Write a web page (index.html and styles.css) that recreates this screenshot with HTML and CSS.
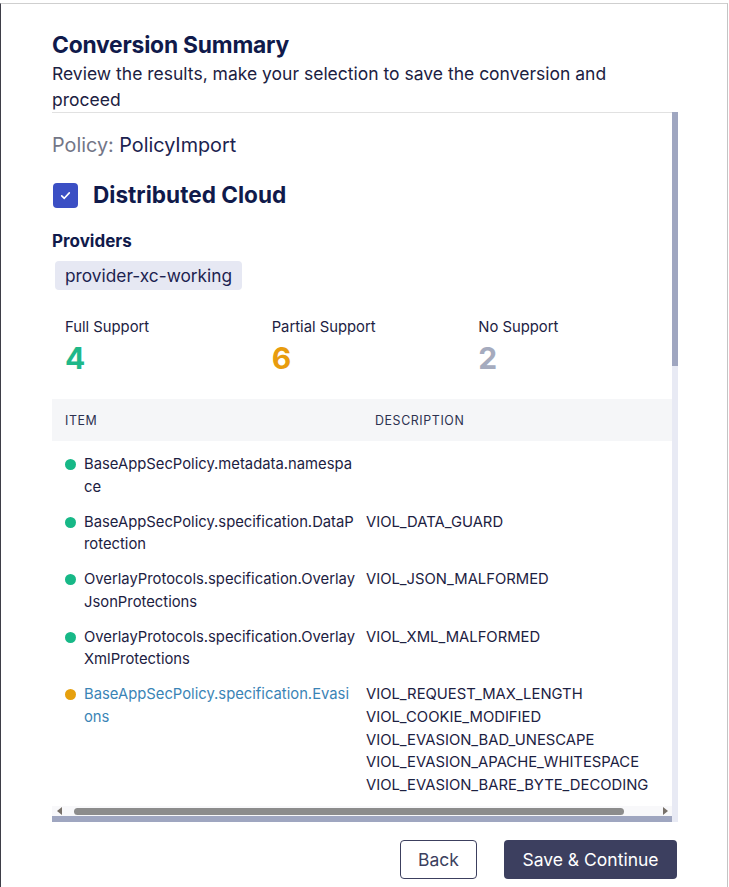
FILE: index.html
```html
<!DOCTYPE html>
<html lang="en">
<head>
<meta charset="utf-8">
<title>Conversion Summary</title>
<link rel="stylesheet" href="styles.css">
</head>
<body>
<div class="modal">
  <h1 class="title">Conversion Summary</h1>
  <p class="subtitle">Review the results, make your selection to save the conversion and proceed</p>

  <div class="scroller">
    <div class="scroll-main">
      <div class="content">
        <div class="policy"><span class="policy-label">Policy:</span> PolicyImport</div>

        <label class="target">
          <span class="checkbox">
            <svg width="13" height="13" viewBox="0 0 12 12"><path d="M2.5 6.3 L4.9 8.6 L9.5 3.6" fill="none" stroke="#fff" stroke-width="1.5" stroke-linecap="round" stroke-linejoin="round"/></svg>
          </span>
          <span class="target-name">Distributed Cloud</span>
        </label>

        <div class="providers-label">Providers</div>
        <div class="chips"><span class="chip">provider-xc-working</span></div>

        <div class="stats">
          <div class="stat"><div class="stat-label">Full Support</div><div class="stat-num full">4</div></div>
          <div class="stat"><div class="stat-label">Partial Support</div><div class="stat-num partial">6</div></div>
          <div class="stat"><div class="stat-label">No Support</div><div class="stat-num none">2</div></div>
        </div>

        <div class="table-wrap">
          <div class="table">
            <div class="thead">
              <div class="th th-item">Item</div>
              <div class="th th-desc">Description</div>
            </div>
            <div class="tbody">
              <div class="tr">
                <div class="td-item"><span class="dot green"></span><span class="item-text">BaseAppSecPolicy.metadata.namespace</span></div>
                <div class="td-desc"></div>
              </div>
              <div class="tr">
                <div class="td-item"><span class="dot green"></span><span class="item-text">BaseAppSecPolicy.specification.DataProtection</span></div>
                <div class="td-desc">VIOL_DATA_GUARD</div>
              </div>
              <div class="tr">
                <div class="td-item"><span class="dot green"></span><span class="item-text">OverlayProtocols.specification.OverlayJsonProtections</span></div>
                <div class="td-desc">VIOL_JSON_MALFORMED</div>
              </div>
              <div class="tr">
                <div class="td-item"><span class="dot green"></span><span class="item-text">OverlayProtocols.specification.OverlayXmlProtections</span></div>
                <div class="td-desc">VIOL_XML_MALFORMED</div>
              </div>
              <div class="tr">
                <div class="td-item"><span class="dot orange"></span><a class="item-text link" href="#">BaseAppSecPolicy.specification.Evasions</a></div>
                <div class="td-desc">
                  <div>VIOL_REQUEST_MAX_LENGTH</div>
                  <div>VIOL_COOKIE_MODIFIED</div>
                  <div>VIOL_EVASION_BAD_UNESCAPE</div>
                  <div>VIOL_EVASION_APACHE_WHITESPACE</div>
                  <div>VIOL_EVASION_BARE_BYTE_DECODING</div>
                </div>
              </div>
            </div>
          </div>
        </div>

        <div class="hscroll">
          <span class="arrow arrow-left"></span>
          <span class="hthumb-track"><span class="hthumb"></span></span>
          <span class="arrow arrow-right"></span>
        </div>
      </div>
      <div class="vbar"><div class="vthumb"></div></div>
    </div>
    <div class="hbar-row"><div class="hbar"></div><div class="corner"></div></div>
  </div>

  <div class="actions">
    <button class="btn btn-secondary" type="button">Back</button>
    <button class="btn btn-primary" type="button">Save &amp; Continue</button>
  </div>
</div>
</body>
</html>
```

FILE: styles.css
```css
* { box-sizing: border-box; }

html, body {
  margin: 0;
  padding: 0;
  background: #ffffff;
  font-family: Inter, "Noto Sans", sans-serif;
  color: #1c2142;
}

.modal {
  margin-top: 3px;
  width: 728px;
  height: 884px;
  border-top: 1px solid #cfcfcf;
  border-right: 1px solid #c4c4c4;
  border-left: 1px solid #3e3e48;
  padding: 28px 49px 0 51px;
  display: flex;
  flex-direction: column;
  overflow: hidden;
}

.title {
  margin: 0;
  font-size: 22.8px;
  line-height: 26px;
  font-weight: 700;
  color: #101a4b;
  letter-spacing: -0.2px;
}

.subtitle {
  margin: 3px 0 0;
  font-size: 17.5px;
  line-height: 26px;
  color: #1c2142;
  width: 600px;
}

.scroller {
  margin-top: -1px;
  width: 626px;
  height: 710px;
  display: flex;
  flex-direction: column;
}

.scroll-main {
  flex: 1;
  display: flex;
  min-height: 0;
}

.content {
  width: 620px;
  border-top: 1px solid #e1e1e1;
  display: flex;
  flex-direction: column;
  overflow: hidden;
}

.vbar {
  width: 6px;
  background: #e8eaf4;
  display: flex;
  flex-direction: column;
}

.vthumb {
  height: 254px;
  background: #9fa6c0;
}

.hbar-row {
  display: flex;
  height: 6px;
}

.hbar {
  width: 620px;
  background: #9fa6c0;
}

.corner {
  width: 6px;
  background: #e8eaf4;
}

.policy {
  margin-top: 20px;
  font-size: 19.8px;
  line-height: 24px;
  color: #1c2350;
}

.policy-label { color: #737687; }

.target {
  margin-top: 24px;
  display: flex;
  align-items: center;
  gap: 15px;
  padding-left: 1px;
}

.checkbox {
  width: 25px;
  height: 25px;
  border-radius: 4px;
  background: #3b4fc4;
  display: flex;
  align-items: center;
  justify-content: center;
}

.target-name {
  font-size: 22.6px;
  line-height: 28px;
  font-weight: 700;
  color: #101a4b;
}

.providers-label {
  margin-top: 21px;
  font-size: 17px;
  line-height: 22px;
  font-weight: 700;
  color: #101a4b;
}

.chips {
  margin-top: 9px;
  display: flex;
  padding-left: 3px;
}

.chip {
  background: #e6e8f3;
  border-radius: 4px;
  padding: 0 10px;
  height: 29px;
  line-height: 29px;
  font-size: 17.3px;
  color: #1c2350;
}

.stats {
  margin-top: 27px;
  display: grid;
  grid-template-columns: repeat(3, 1fr);
}

.stat { padding-left: 13px; }

.stat-label {
  font-size: 14.8px;
  line-height: 20px;
  color: #1c2142;
}

.stat-num {
  margin-top: 3px;
  font-size: 30px;
  line-height: 36px;
  font-weight: 700;
}

.stat-num.full { color: #1fb889; }
.stat-num.partial { color: #e89c0e; }
.stat-num.none { color: #a5abbe; }

.table-wrap {
  margin-top: 23px;
  flex: 1;
  min-height: 0;
  overflow: hidden;
}

.table {
  width: 668px;
}

.thead {
  display: grid;
  grid-template-columns: 310px 1fr;
  height: 42px;
  align-items: center;
  background: #f5f6f8;
}

.th {
  font-size: 12.4px;
  text-transform: uppercase;
  letter-spacing: 0.6px;
  color: #2d3250;
  padding-left: 13px;
}

.tr {
  display: grid;
  grid-template-columns: 310px 1fr;
  padding-top: 12px;
  font-size: 14.8px;
  line-height: 22.75px;
}

.td-item {
  display: flex;
  align-items: flex-start;
  padding-left: 13px;
}

.dot {
  flex: none;
  width: 11px;
  height: 11px;
  border-radius: 50%;
  margin-top: 6px;
  margin-right: 8px;
}

.dot.green { background: #17b887; }
.dot.orange { background: #e6a00e; }

.item-text {
  width: 271.5px;
  word-break: break-all;
  color: #1c2142;
}

.item-text.link {
  color: #3a84b6;
  text-decoration: none;
}

.td-desc {
  padding-left: 4px;
  color: #1c2142;
}

.hscroll {
  flex: none;
  height: 10px;
  background: #f8f8fa;
  display: flex;
  align-items: center;
  padding: 0 4px 0 5px;
}

.arrow {
  width: 0;
  height: 0;
  border-top: 4px solid transparent;
  border-bottom: 4px solid transparent;
}

.arrow-left { border-right: 5px solid #77706a; }
.arrow-right { border-left: 5px solid #77706a; }

.hthumb-track {
  flex: 1;
  display: flex;
  padding: 0 39px 0 12px;
}

.hthumb {
  flex: 1;
  height: 7px;
  border-radius: 4px;
  background: #8c8c8c;
}

.actions {
  margin-top: 18px;
  display: flex;
  justify-content: flex-end;
  gap: 27px;
  width: 626px;
}

.btn {
  font-family: Inter, "Noto Sans", sans-serif;
  font-size: 17.5px;
  height: 39px;
  border-radius: 4px;
  cursor: pointer;
}

.btn-secondary {
  width: 77px;
  background: #ffffff;
  border: 1px solid #3c3f5e;
  color: #3c3f5e;
}

.btn-primary {
  width: 173px;
  border: none;
  background: #3c3f5f;
  color: #ffffff;
  margin-right: 1px;
}
```
